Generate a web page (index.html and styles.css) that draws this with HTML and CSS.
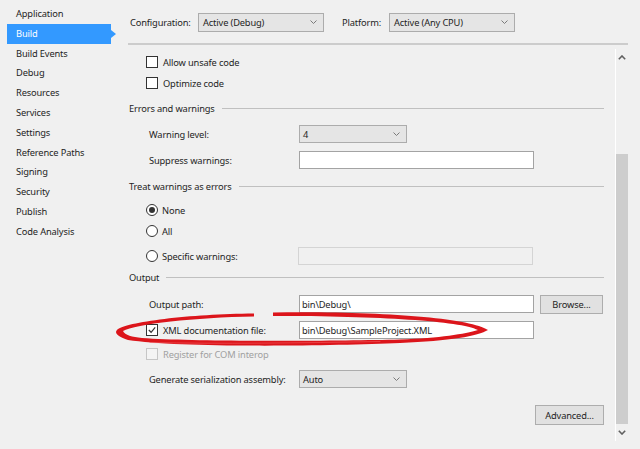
FILE: index.html
```html
<!DOCTYPE html>
<html>
<head>
<meta charset="utf-8">
<link rel="stylesheet" href="styles.css">
</head>
<body>
<div class="page">
  <nav class="nav">
    <div class="nav-item">Application</div>
    <div class="nav-item active">Build</div>
    <div class="nav-item">Build Events</div>
    <div class="nav-item">Debug</div>
    <div class="nav-item">Resources</div>
    <div class="nav-item">Services</div>
    <div class="nav-item">Settings</div>
    <div class="nav-item">Reference Paths</div>
    <div class="nav-item">Signing</div>
    <div class="nav-item">Security</div>
    <div class="nav-item">Publish</div>
    <div class="nav-item">Code Analysis</div>
  </nav>
  <main class="main">
    <div class="topbar">
      <span class="top-label config-label">Configuration:</span>
      <div class="select select-top"><span>Active (Debug)</span><svg class="chev" viewBox="0 0 7 4"><polyline points="0.5,0.5 3.5,3.5 6.5,0.5"/></svg></div>
      <span class="top-label platform-label">Platform:</span>
      <div class="select select-top"><span>Active (Any CPU)</span><svg class="chev" viewBox="0 0 7 4"><polyline points="0.5,0.5 3.5,3.5 6.5,0.5"/></svg></div>
    </div>
    <div class="topbar-rule"></div>
    <div class="body">
      <div class="content">
        <div class="check-row sp7"><span class="checkbox"></span><span>Allow unsafe code</span></div>
        <div class="check-row sp1"><span class="checkbox"></span><span>Optimize code</span></div>

        <div class="section sp7"><span>Errors and warnings</span><span class="section-line"></span></div>
        <div class="field sp9"><span class="field-label">Warning level:</span><div class="select select-small"><span>4</span><svg class="chev" viewBox="0 0 7 4"><polyline points="0.5,0.5 3.5,3.5 6.5,0.5"/></svg></div></div>
        <div class="field sp8"><span class="field-label">Suppress warnings:</span><div class="input"></div></div>

        <div class="section sp9"><span>Treat warnings as errors</span><span class="section-line"></span></div>
        <div class="check-row sp6"><span class="radio checked"></span><span>None</span></div>
        <div class="check-row sp1"><span class="radio"></span><span>All</span></div>
        <div class="check-row radio-field sp6"><span class="radio"></span><span class="radio-label">Specific warnings:</span><div class="input disabled"></div></div>

        <div class="section sp4"><span>Output</span><span class="section-line"></span></div>
        <div class="field sp10"><span class="field-label">Output path:</span><div class="input"><span>bin\Debug\</span></div><div class="button browse">Browse...</div></div>
        <div class="check-row radio-field sp8"><span class="checkbox checked"><svg viewBox="0 0 11 11"><polyline points="2,5.5 4.5,8 9,2.5"/></svg></span><span class="radio-label">XML documentation file:</span><div class="input"><span>bin\Debug\SampleProject.XML</span></div></div>
        <div class="check-row sp5 disabled-row"><span class="checkbox disabled"></span><span>Register for COM interop</span></div>
        <div class="field sp6"><span class="field-label">Generate serialization assembly:</span><div class="select select-small"><span>Auto</span><svg class="chev" viewBox="0 0 7 4"><polyline points="0.5,0.5 3.5,3.5 6.5,0.5"/></svg></div></div>
        <div class="actions sp17"><div class="button advanced">Advanced...</div></div>
      </div>
      <div class="scrollbar">
        <div class="sb-arrow"><svg viewBox="0 0 8 5"><polyline points="0.8,4.2 4,1 7.2,4.2"/></svg></div>
        <div class="sb-track"><div class="sb-thumb"></div></div>
        <div class="sb-arrow"><svg viewBox="0 0 8 5"><polyline points="0.8,0.8 4,4 7.2,0.8"/></svg></div>
      </div>
    </div>
  </main>
  <svg class="annotation" viewBox="0 0 640 449">
    <path class="ink" d="M273,312.5 C380,311 470,318 488,330 C478,336 450,341 400,343 C330,346 180,348 128,340 C118,337 114,333 117,330 C125,322 190,314 254,313.5 L254,316.5 C195,317.5 135,324 123,331 C125,335 132,337 142,338 C200,342 340,341 400,339.5 C440,338 465,334 478,330 C460,321 380,316 273,316 Z"/>
    <path class="shine" d="M150,342.5 C220,344 300,343 380,341.5"/>
  </svg>
</div>
</body>
</html>
```

FILE: styles.css
```css
* { box-sizing: border-box; }
html, body { margin: 0; padding: 0; }
body {
  background: #f0f0f0;
  font-family: "Noto Sans", "Open Sans", sans-serif;
  font-size: 9.3px;
  letter-spacing: -0.15px;
  color: #1e1e1e;
}
.page {
  position: relative;
  width: 640px;
  height: 449px;
  display: flex;
  overflow: hidden;
}
.nav {
  width: 128px;
  padding-top: 4px;
  flex: none;
}
.nav-item {
  height: 19.8px;
  line-height: 19.8px;
  padding-left: 16px;
  white-space: nowrap;
}
.nav-item.active {
  position: relative;
  background: #3399ff;
  color: #fff;
  margin-left: 7px;
  padding-left: 9px;
  width: 104px;
}
.nav-item.active::after {
  content: "";
  position: absolute;
  right: -5px;
  top: 6px;
  border-left: 5px solid #3399ff;
  border-top: 4px solid transparent;
  border-bottom: 4px solid transparent;
}
.main {
  width: 500px;
  display: flex;
  flex-direction: column;
}
.topbar {
  height: 43px;
  display: flex;
  align-items: center;
  padding-left: 2px;
  padding-top: 1px;
}
.top-label { flex: none; }
.config-label { width: 68px; }
.platform-label { margin-left: 18px; width: 47px; }
.topbar-rule {
  height: 2px;
  background: #cccccc;
}
.select {
  display: flex;
  align-items: center;
  justify-content: space-between;
  background: #e5e5e5;
  border: 1px solid #acacac;
  padding: 0 6px 0 3px;
  flex: none;
}
.select-top { width: 126px; height: 19px; padding-left: 4px; }
.select-small { width: 108px; height: 18px; }
.chev {
  width: 7px;
  height: 4px;
  fill: none;
  stroke: #7a7a7a;
  stroke-width: 1;
}
.body {
  flex: 1;
  display: flex;
}
.content {
  flex: 1;
  padding-right: 11px;
}
.sp1 { margin-top: 1px; }
.sp4 { margin-top: 4px; }
.sp5 { margin-top: 5px; }
.sp6 { margin-top: 6px; }
.sp7 { margin-top: 7px; }
.sp8 { margin-top: 8px; }
.sp9 { margin-top: 9px; }
.sp10 { margin-top: 10px; }
.sp17 { margin-top: 17px; }
.check-row {
  display: flex;
  align-items: center;
  height: 20px;
  padding-left: 18px;
}
.checkbox {
  width: 12px;
  height: 12px;
  border: 1px solid #333333;
  background: #ffffff;
  margin-right: 5px;
  flex: none;
  display: flex;
}
.checkbox svg {
  width: 10px;
  height: 10px;
  fill: none;
  stroke: #333;
  stroke-width: 1.3;
}
.checkbox.disabled { border-color: #c6c6c6; background: #f4f4f4; }
.disabled-row { color: #a0a0a0; }
.radio {
  width: 12px;
  height: 12px;
  border: 1px solid #333333;
  border-radius: 50%;
  background: #ffffff;
  margin-right: 4px;
  flex: none;
  display: flex;
  align-items: center;
  justify-content: center;
}
.radio.checked::after {
  content: "";
  width: 6px;
  height: 6px;
  border-radius: 50%;
  background: #333333;
}
.radio-field { height: 18px; }
.radio-label { width: 136px; }
.section {
  display: flex;
  align-items: center;
  height: 16px;
  padding-left: 1px;
}
.section-line {
  flex: 1;
  border-top: 1px solid #c0c0c0;
  margin-left: 7px;
}
.field {
  display: flex;
  align-items: center;
  height: 18px;
  padding-left: 21px;
}
.field-label { width: 150px; }
.input {
  width: 235px;
  height: 18px;
  background: #ffffff;
  border: 1px solid #a3a3a3;
  padding-left: 2px;
  display: flex;
  align-items: center;
}
.input.disabled {
  background: #f0f0f0;
  border-color: #d4d4d4;
}
.button {
  background: #e1e1e1;
  border: 1px solid #adadad;
  display: flex;
  align-items: center;
  justify-content: center;
}
.browse { width: 63px; height: 19px; margin-left: 6px; }
.actions {
  display: flex;
  justify-content: flex-end;
}
.advanced { width: 69px; height: 20px; }
.scrollbar {
  width: 13px;
  margin-top: 4px;
  height: 392px;
  border-left: 1px solid #ffffff;
  display: flex;
  flex-direction: column;
}
.sb-arrow {
  height: 17px;
  display: flex;
  align-items: center;
  justify-content: center;
}
.sb-arrow svg {
  width: 8px;
  height: 5px;
  fill: none;
  stroke: #606060;
  stroke-width: 1.6;
}
.sb-track { flex: 1; display: flex; flex-direction: column; justify-content: flex-end; }
.sb-thumb { height: 270px; background: #cdcdcd; }
.annotation {
  position: absolute;
  left: 0;
  top: 0;
  width: 640px;
  height: 449px;
  pointer-events: none;
}
.annotation .ink { fill: #dc151b; }
.annotation .shine {
  fill: none;
  stroke: #f25a5e;
  stroke-width: 1;
  stroke-linecap: round;
  opacity: 0.6;
}
```
